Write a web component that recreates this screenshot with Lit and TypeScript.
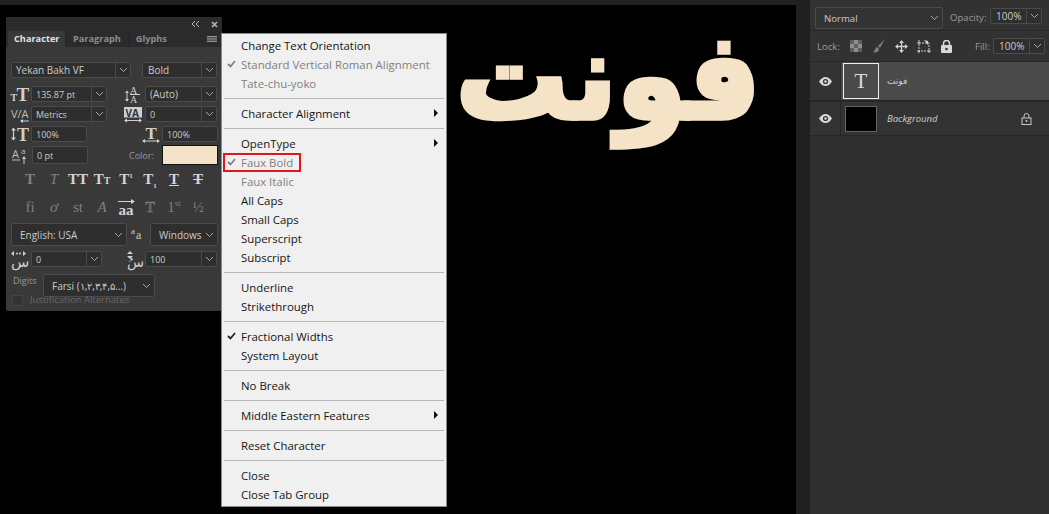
import { LitElement, html, css } from "lit";
import { customElement } from "lit/decorators.js";

const chev = html`<svg class="chev" viewBox="0 0 9 6"><path d="M1 1l3.500 3.500L8 1" fill="none" stroke="#a8a8a8" stroke-width="1"/></svg>`;

type Item = { t?: string; d?: boolean; c?: boolean; a?: boolean; sep?: boolean; h?: boolean };
const items: Item[] = [
  { t: "Change Text Orientation" },
  { t: "Standard Vertical Roman Alignment", d: true, c: true },
  { t: "Tate-chu-yoko", d: true },
  { sep: true },
  { t: "Character Alignment", a: true },
  { sep: true },
  { t: "OpenType", a: true },
  { t: "Faux Bold", d: true, c: true, h: true },
  { t: "Faux Italic", d: true },
  { t: "All Caps" },
  { t: "Small Caps" },
  { t: "Superscript" },
  { t: "Subscript" },
  { sep: true },
  { t: "Underline" },
  { t: "Strikethrough" },
  { sep: true },
  { t: "Fractional Widths", c: true },
  { t: "System Layout" },
  { sep: true },
  { t: "No Break" },
  { sep: true },
  { t: "Middle Eastern Features", a: true },
  { sep: true },
  { t: "Reset Character" },
  { sep: true },
  { t: "Close" },
  { t: "Close Tab Group" },
];

const SERIF = "Liberation Serif";
const SANS = "Open Sans";

const icons = {
  size: html`<svg class="ic" viewBox="0 0 21 17"><text x="0.500" y="15" font-family="${SERIF}" font-size="10" font-weight="700" fill="#cfcfcf">T</text><text x="6.500" y="15" font-family="${SERIF}" font-size="19" font-weight="700" fill="#cfcfcf">T</text></svg>`,
  leading: html`<svg class="ic" viewBox="0 0 21 17"><text x="6" y="7.500" font-family="${SERIF}" font-size="10" fill="#cfcfcf">A</text><text x="6" y="16.500" font-family="${SERIF}" font-size="10" fill="#cfcfcf">A</text><path d="M6 8.500h10M3 6v9" stroke="#cfcfcf"/><path d="M1 7l2-2.500L5 7zM1 13l2 2.500L5 13z" fill="#cfcfcf"/></svg>`,
  kern: html`<svg class="ic" viewBox="0 0 21 17"><text x="1" y="12" font-family="${SANS}" font-size="11" fill="#bdbdbd">V/A</text><path d="M11 15h8" stroke="#cfcfcf"/><path d="M13 13l-3 2 3 2z" fill="#cfcfcf"/></svg>`,
  track: html`<svg class="ic" viewBox="0 0 21 17"><rect x="0" y="1" width="18" height="10.500" fill="#cfcfcf"/><text x="1.500" y="10.500" font-family="${SANS}" font-size="10" font-weight="700" fill="#333">VA</text><path d="M1 14.500h16" stroke="#cfcfcf"/><path d="M3 12.500L0 14.500l3 2zM15 12.500l3 2-3 2z" fill="#cfcfcf"/></svg>`,
  vscale: html`<svg class="ic" viewBox="0 0 21 17"><text x="7" y="15" font-family="${SERIF}" font-size="18" font-weight="700" fill="#cfcfcf">T</text><path d="M3.500 3v10" stroke="#cfcfcf" stroke-width="1.200"/><path d="M1 4.500l2.500-3 2.500 3zM1 11.500l2.500 3 2.500-3z" fill="#cfcfcf"/></svg>`,
  hscale: html`<svg class="ic" viewBox="0 0 21 17"><text x="4.500" y="13" font-family="${SERIF}" font-size="17" font-weight="700" fill="#cfcfcf">T</text><path d="M2 15h16" stroke="#cfcfcf"/><path d="M4 13l-3 2 3 2zM16 13l3 2-3 2z" fill="#cfcfcf"/></svg>`,
  base: html`<svg class="ic" viewBox="0 0 21 17"><text x="2" y="11" font-family="${SANS}" font-size="11" fill="#bdbdbd">A</text><text x="11" y="7" font-family="${SANS}" font-size="8" fill="#bdbdbd">a</text><path d="M2 13h8" stroke="#bdbdbd"/><path d="M14 11v6" stroke="#cfcfcf"/><path d="M12 12l2-3 2 3z" fill="#cfcfcf"/></svg>`,
  aa: html`<svg class="aa" viewBox="0 0 23 20"><text x="4" y="9" font-family="${SERIF}" font-size="9" fill="#cfcfcf">a</text><text x="9" y="14" font-family="${SERIF}" font-size="12" fill="#cfcfcf">a</text></svg>`,
  sin1: html`<svg class="ic" viewBox="0 0 21 17"><text x="1" y="16" font-family="DejaVu Sans" font-size="15" fill="#cfcfcf">س</text><path d="M4 0L1 2.500 4 5zM13 0l3 2.500L13 5z" fill="#cfcfcf"/><circle cx="7" cy="2.500" r="1" fill="#cfcfcf"/><circle cx="10" cy="2.500" r="1" fill="#cfcfcf"/></svg>`,
  sin2: html`<svg class="ic" viewBox="0 0 21 17"><text x="3" y="16" font-family="DejaVu Sans" font-size="14" fill="#cfcfcf">سُ</text><path d="M3 3l3-3 3 3zM3 5l3 3 3-3z" fill="#cfcfcf"/></svg>`,
};

@customElement("app-root")
export class AppRoot extends LitElement {
  static styles = css`
    :host { display: block; width: 1049px; height: 514px; position: relative; overflow: hidden; background: #000; font-family: "Open Sans", "Noto Sans", sans-serif; }
    .stage { display: grid; grid-template-columns: 796px 14px 1fr; height: 514px; }
    .canvas { background: #000; border-top: 5px solid #222; }
    .gutter { background: #202020; }
    .side { background: #2f2f2f; display: flex; flex-direction: column; color: #bdbdbd; font-size: 10px; }
    .big { position: absolute; left: 456px; top: 0; font: bold 111px/150px "DejaVu Sans", sans-serif; color: #f5e3c8; -webkit-text-stroke: 5px #f5e3c8; direction: rtl; white-space: nowrap; transform: scale(1.01, 1.07); transform-origin: 0 40px; }

    .panel { position: absolute; left: 6px; top: 17px; width: 216px; height: 294px; background: #393939; border-radius: 2px; color: #c8c8c8; font-size: 9px; }
    .ptop { height: 14px; background: #2b2b2b; border-radius: 2px 2px 0 0; display: flex; justify-content: flex-end; align-items: center; gap: 12px; padding-right: 4px; }
    .tabs { height: 16px; background: #2b2b2b; display: flex; align-items: stretch; font-weight: 700; font-size: 9.2px; line-height: 16px; color: #8c8c8c; position: relative; padding-left: 2px; }
    .tab { padding: 0 7px; border-right: 1px solid #262626; }
    .tab.on { background: #393939; color: #e2e2e2; padding: 0 6px; width: 45px; }
    .ham { position: absolute; right: 5px; top: 5px; width: 10px; height: 6px; }
    .body { display: flex; flex-direction: column; padding: 15px 0 0 4px; }
    .row { display: flex; align-items: center; height: 16px; flex: none; }
    .combo { display: flex; align-items: center; height: 16px; box-sizing: border-box; background: #2e2e2e; border: 1px solid #4a4a4a; border-radius: 2px; color: #cbcbcb; padding-left: 4px; white-space: nowrap; flex: none; }
    .combo .lbl { flex: 1; }
    .combo .drop { width: 15px; height: 100%; border-left: 1px solid #4a4a4a; display: flex; align-items: center; justify-content: center; box-sizing: border-box; }
    .combo .plain { margin-right: 3px; }
    .fs10 { font-size: 10px; }
    .tall { height: 23px; padding-left: 8px; font-size: 10px; }
    .row.h23 { height: 23px; }
    .row.h20 { height: 20px; }
    .chev { width: 9px; height: 6px; display: block; }
    .ic { width: 21px; height: 17px; flex: none; display: block; overflow: visible; margin: -1px 0; }
    .aa { width: 23px; height: 20px; flex: none; display: block; overflow: visible; }
    .lab { color: #9a9a9a; }
    .digits { margin-left: 3px; width: 30px; position: relative; top: -5px; }
    .glyphs { display: flex; height: 20px; padding-left: 8px; font: 700 15px/20px "Liberation Serif", serif; color: #d4d4d4; }
    .glyphs span { width: 24px; text-align: center; white-space: nowrap; flex: none; }
    .glyphs small { font-size: 10px; }
    .glyphs sup, .glyphs sub { font-size: 7px; line-height: 0; }
    .plainw { font-weight: 400; }
    .dim { color: #808080; }
    .it { font-style: italic; font-weight: 400; }
    .u { text-decoration: underline; }
    .s { text-decoration: line-through; }
    .outl { color: transparent; -webkit-text-stroke: 0.7px #808080; }
    .vec { display: flex; flex-direction: column; align-items: center; line-height: 12px; font-weight: 700; }
    .vec svg { width: 18px; height: 5px; display: block; margin-top: 2px; }
    .swatch { width: 56px; height: 20px; box-sizing: border-box; background: #f5e3c8; border: 1px solid #111; flex: none; }
    .jcheck { width: 9px; height: 9px; background: #333; border: 1px solid #444; margin: 0 7px 0 2px; flex: none; }
    .just { margin-top: -3px; color: #686868; font-size: 9.5px; line-height: 12px; height: 12px; }

    .menu { position: absolute; left: 221px; top: 33px; width: 226px; height: 474px; box-sizing: border-box; background: #f0f0f0; border: 1px solid #8a8a8a; padding: 2px; font-size: 11.4px; color: #151515; }
    .mi { height: 19px; line-height: 19px; padding-left: 17px; position: relative; white-space: nowrap; }
    .mi.d { color: #808080; }
    .check { position: absolute; left: 3px; top: 5px; width: 9px; height: 8px; }
    .arrow { position: absolute; right: 6px; top: 5px; width: 0; height: 0; border-left: 4px solid #111; border-top: 4px solid transparent; border-bottom: 4px solid transparent; }
    .sep { height: 1px; background: #b8b8b8; margin: 5px 0; }
    .hl { position: absolute; left: -1px; top: 0; width: 78px; height: 19px; border: 2px solid #e4131c; box-sizing: border-box; }

    .blend { height: 31px; box-sizing: border-box; display: flex; align-items: flex-start; padding: 7px 0 0 5px; border-bottom: 1px solid #272727; background: #323232; }
    .normal { width: 128px; height: 22px; padding-left: 8px; background: #333; font-size: 9.6px; }
    .small { width: 52px; height: 16px; padding-left: 5px; font-size: 10px; }
    .oplab { font-size: 9.6px; line-height: 22px; margin-left: 7px; width: 40px; }
    .lock { height: 30px; box-sizing: border-box; display: flex; align-items: center; padding-left: 7px; background: #323232; }
    .layer { display: flex; align-items: center; background: #333; }
    .l1 { height: 41px; border-bottom: 2px solid #272727; box-sizing: border-box; border-top: 1px solid #272727; }
    .l2 { height: 33px; border-bottom: 1px solid #272727; box-sizing: content-box; }
    .eye { width: 31px; height: 100%; display: flex; align-items: center; justify-content: center; border-right: 1px solid #272727; flex: none; box-sizing: border-box; }
    .eye svg { width: 13px; height: 9px; display: block; }
    .sel { background: #4a4a4a; flex: 1; height: 100%; display: flex; align-items: center; padding-left: 2px; }
    .thumb { width: 36px; height: 36px; border: 1px solid #eee; display: flex; align-items: center; justify-content: center; font: 21px "Liberation Serif", serif; color: #ddd; box-sizing: border-box; margin-right: 8px; }
    .name { font: 9px "DejaVu Sans", sans-serif; color: #d0d0d0; }
    .bgthumb { width: 32px; height: 26px; background: #000; border: 1px solid #666; box-sizing: border-box; margin: 0 10px 0 4px; flex: none; }
    .bgname { font-style: italic; font-size: 9.5px; color: #cfcfcf; flex: 1; }
    .ico { flex: none; display: block; }
    .ml9 { margin-left: 9px; } .ml10 { margin-left: 10px; }
    .locklab { width: 26px; font-size: 9.6px; }
    .filllab { margin-left: 23px; width: 18px; font-size: 9.6px; }
    .lockr { margin-right: 17px; }
  `;

  render() {
    return html`<div class="stage">
        <div class="canvas"></div>
        <div class="gutter"></div>
        <div class="side">
          <div class="blend">
            <div class="combo normal"><span class="lbl">Normal</span><span class="plain">${chev}</span></div>
            <span class="lab oplab">Opacity:</span>
            <div class="combo small" style="margin-top:1px"><span class="lbl">100%</span><span class="drop">${chev}</span></div>
          </div>
          <div class="lock">
            <span class="lab locklab">Lock:</span>
            <svg class="ico" style="margin-left:7px" width="12" height="12" viewBox="0 0 12 12"><rect width="12" height="12" fill="#8f8f8f"/><path d="M0 0h4v4H0zM8 0h4v4H8zM4 4h4v4H4zM0 8h4v4H0zM8 8h4v4H8z" fill="#5e5e5e"/></svg>
            <svg class="ico ml10" width="14" height="14" viewBox="0 0 14 14"><path d="M13 0L6 7l2 2zM5 8c-3 1-1 4-4 5 3 1 6 0 6-3z" fill="#7e7e7e"/></svg>
            <svg class="ico ml9" width="13" height="13" viewBox="0 0 13 13"><path d="M6.500 0L9 3H7.200v2.800H10V4l3 2.500L10 9V7.200H7.200V10H9l-2.500 3L4 10h1.800V7.200H3V9L0 6.500 3 4v1.800h2.800V3H4z" fill="#cfcfcf"/></svg>
            <svg class="ico ml9" width="14" height="13" viewBox="0 0 14 13"><path d="M2 3h10v8H2z" fill="none" stroke="#cfcfcf" stroke-dasharray="2 1"/><path d="M7 0l4 1v4z" fill="#cfcfcf"/><path d="M0 3h3M0 11h3M11 11h3M2 0v3M2 11v2M12 11v2" stroke="#cfcfcf"/></svg>
            <svg class="ico ml10" width="11" height="13" viewBox="0 0 11 13"><path d="M2.500 6V3.500a3 3 0 0 1 6 0V6" fill="none" stroke="#d8d8d8" stroke-width="1.500"/><rect y="5" width="11" height="8" rx="1" fill="#d8d8d8"/><circle cx="5.500" cy="9" r="1.300" fill="#323232"/></svg>
            <span class="lab filllab">Fill:</span>
            <div class="combo small"><span class="lbl">100%</span><span class="drop">${chev}</span></div>
          </div>
          <div class="layer l1">
            <div class="eye">${this.eye()}</div>
            <div class="sel">
              <div class="thumb">T</div>
              <span class="name">فونت</span>
            </div>
          </div>
          <div class="layer l2">
            <div class="eye">${this.eye()}</div>
            <div class="bgthumb"></div>
            <span class="bgname">Background</span>
            <svg class="ico lockr" width="11" height="12" viewBox="0 0 11 12"><path d="M3 5V3a2.500 2.500 0 0 1 5 0v2" fill="none" stroke="#c8c8c8"/><rect x="1" y="5" width="9" height="6.500" fill="none" stroke="#c8c8c8"/><circle cx="5.500" cy="8" r="1" fill="#c8c8c8"/></svg>
          </div>
        </div>
      </div>
      <div class="big">فونت</div>
      ${this.panel()}
      ${this.menu()}`;
  }

  eye() {
    return html`<svg viewBox="0 0 13 9"><path d="M0 4.500C2 1.500 4 0 6.500 0S11 1.500 13 4.500C11 7.500 9 9 6.500 9S2 7.500 0 4.500z" fill="#d8d8d8"/><circle cx="6.500" cy="4.500" r="2.600" fill="#333"/><circle cx="6.500" cy="4.500" r="1.300" fill="#d8d8d8"/></svg>`;
  }

  combo(label: string, w: number, ml = 0, big = false) {
    return html`<div class="combo ${big ? "fs10" : ""}" style="width:${w}px;margin-left:${ml}px"><span class="lbl">${label}</span><span class="drop">${chev}</span></div>`;
  }

  panel() {
    return html`<div class="panel">
      <div class="ptop">
        <svg width="8" height="6" viewBox="0 0 8 6"><path d="M4 0L1 3l3 3M8 0L5 3l3 3" fill="none" stroke="#b5b5b5"/></svg>
        <svg width="7" height="7" viewBox="0 0 7 7"><path d="M1 1l5 5M6 1L1 6" stroke="#b5b5b5" stroke-width="1.600"/></svg>
      </div>
      <div class="tabs">
        <div class="tab on">Character</div><div class="tab">Paragraph</div><div class="tab" style="border:none">Glyphs</div>
        <svg class="ham" viewBox="0 0 10 6"><path d="M0 .5h10M0 2.200h10M0 3.900h10M0 5.500h10" stroke="#a0a0a0" stroke-width=".9"/></svg>
      </div>
      <div class="body">
        <div class="row" style="margin-left:1px">${this.combo("Yekan Bakh VF", 120, 0, true)}<div class="combo fs10" style="width:75px;margin-left:11px;padding-left:5px"><span class="lbl">Bold</span><span class="drop">${chev}</span></div></div>
        <div class="row" style="margin-top:8px">
          ${icons.size}${this.combo("135.87 pt", 76)}
          <span style="width:17px"></span>${icons.leading}${this.combo("(Auto)", 72, 0, true)}
        </div>
        <div class="row" style="margin-top:4px">
          ${icons.kern}${this.combo("Metrics", 76)}
          <span style="width:17px"></span>${icons.track}${this.combo("0", 72)}
        </div>
        <div class="row" style="margin-top:4px">
          ${icons.vscale}<div class="combo" style="width:56px">100%</div>
          <span style="width:54px"></span>${icons.hscale}<div class="combo" style="width:56px">100%</div>
        </div>
        <div class="row h20" style="margin-top:3px">
          ${icons.base}<div class="combo" style="width:56px;height:18px;margin-left:1px">0 pt</div>
          <span class="lab" style="margin-left:41px;width:33px">Color:</span>
          <div class="swatch"></div>
        </div>
        <div class="glyphs" style="margin-top:4px">
          <span class="dim">T</span><span class="dim it">T</span><span>TT</span><span>T<small>T</small></span><span>T<sup>1</sup></span><span>T<sub>1</sub></span><span class="u">T</span><span class="s">T</span>
        </div>
        <div class="glyphs plainw" style="margin-top:8px">
          <span class="dim">fi</span><span class="dim it">ơ</span><span class="dim">st</span><span class="dim it">A</span><span class="vec"><svg viewBox="0 0 18 5"><path d="M1 2.500h14" stroke="#d4d4d4"/><path d="M14 0l4 2.500L14 5z" fill="#d4d4d4"/></svg>aa</span><span class="outl">T</span><span class="dim">1<sup style="font-size:9px">st</sup></span><span class="dim">½</span>
        </div>
        <div class="row h23" style="margin-top:6px;margin-left:1px">
          <div class="combo tall" style="width:116px"><span class="lbl">English: USA</span><span class="plain">${chev}</span></div>
          ${icons.aa}
          <div class="combo tall" style="width:68px"><span class="lbl">Windows</span><span class="plain">${chev}</span></div>
        </div>
        <div class="row" style="margin-top:5px">
          ${icons.sin1}${this.combo("0", 71)}
          <span style="width:22px"></span>${icons.sin2}${this.combo("100", 72)}
        </div>
        <div class="row h23" style="margin-top:7px">
          <span class="lab digits">Digits</span>
          <div class="combo tall" style="width:112px"><span class="lbl">Farsi (١,٢,٣,۴,۵...)</span><span class="plain">${chev}</span></div>
        </div>
        <div class="row just">
          <span class="jcheck"></span>Justification Alternates
        </div>
      </div>
    </div>`;
  }

  menu() {
    return html`<div class="menu">
      ${items.map((i) => i.sep ? html`<div class="sep"></div>` : html`<div class="mi ${i.d ? "d" : ""}">
        ${i.c ? html`<svg class="check" viewBox="0 0 9 8"><path d="M1 4l2.500 2.500L8 1" fill="none" stroke="${i.d ? "#808080" : "#222"}" stroke-width="1.800"/></svg>` : ""}
        ${i.t}
        ${i.a ? html`<span class="arrow"></span>` : ""}
        ${i.h ? html`<span class="hl"></span>` : ""}
      </div>`)}
    </div>`;
  }
}
